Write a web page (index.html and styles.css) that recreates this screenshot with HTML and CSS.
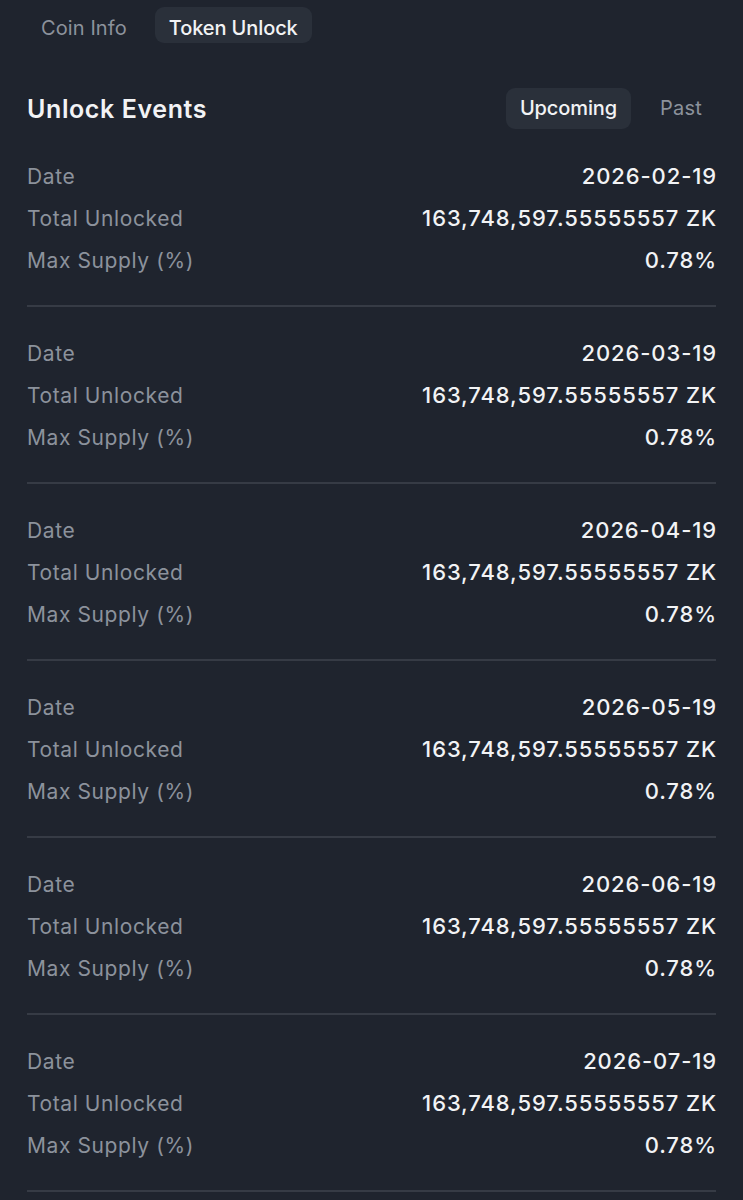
FILE: index.html
```html
<!DOCTYPE html>
<html>
<head>
<meta charset="utf-8">
<link rel="stylesheet" href="styles.css">
</head>
<body>
<div class="page">
  <nav class="tabs">
    <span class="tab">Coin Info</span>
    <span class="tab active">Token Unlock</span>
  </nav>
  <header class="head">
    <h1 class="title">Unlock Events</h1>
    <div class="seg">
      <span class="seg-item active">Upcoming</span>
      <span class="seg-item">Past</span>
    </div>
  </header>
  <section class="events">
    <div class="event">
      <div class="row"><span class="label">Date</span><span class="value">2026-02-19</span></div>
      <div class="row"><span class="label">Total Unlocked</span><span class="value">163,748,597.55555557 ZK</span></div>
      <div class="row"><span class="label">Max Supply (%)</span><span class="value">0.78%</span></div>
    </div>
    <div class="event">
      <div class="row"><span class="label">Date</span><span class="value">2026-03-19</span></div>
      <div class="row"><span class="label">Total Unlocked</span><span class="value">163,748,597.55555557 ZK</span></div>
      <div class="row"><span class="label">Max Supply (%)</span><span class="value">0.78%</span></div>
    </div>
    <div class="event">
      <div class="row"><span class="label">Date</span><span class="value">2026-04-19</span></div>
      <div class="row"><span class="label">Total Unlocked</span><span class="value">163,748,597.55555557 ZK</span></div>
      <div class="row"><span class="label">Max Supply (%)</span><span class="value">0.78%</span></div>
    </div>
    <div class="event">
      <div class="row"><span class="label">Date</span><span class="value">2026-05-19</span></div>
      <div class="row"><span class="label">Total Unlocked</span><span class="value">163,748,597.55555557 ZK</span></div>
      <div class="row"><span class="label">Max Supply (%)</span><span class="value">0.78%</span></div>
    </div>
    <div class="event">
      <div class="row"><span class="label">Date</span><span class="value">2026-06-19</span></div>
      <div class="row"><span class="label">Total Unlocked</span><span class="value">163,748,597.55555557 ZK</span></div>
      <div class="row"><span class="label">Max Supply (%)</span><span class="value">0.78%</span></div>
    </div>
    <div class="event">
      <div class="row"><span class="label">Date</span><span class="value">2026-07-19</span></div>
      <div class="row"><span class="label">Total Unlocked</span><span class="value">163,748,597.55555557 ZK</span></div>
      <div class="row"><span class="label">Max Supply (%)</span><span class="value">0.78%</span></div>
    </div>
  </section>
</div>
</body>
</html>
```

FILE: styles.css
```css
* { box-sizing: border-box; margin: 0; padding: 0; }
html, body { background: #1f242e; }
body {
  font-family: "Inter", "Noto Sans", sans-serif;
  color: #f2f3f5;
  height: 1200px;
  overflow: hidden;
}
.page { padding: 0 27px; }
.tabs {
  display: flex;
  align-items: center;
  gap: 14px;
  padding-top: 7px;
}
.tab {
  font-size: 20px;
  letter-spacing: 0.1px;
  color: #8c929c;
  padding: 6px 14px 0;
  height: 36px;
  line-height: 30px;
  border-radius: 9px;
}
.tab.active {
  background: #2a303a;
  color: #f2f3f5;
  font-weight: 500;
  letter-spacing: -0.1px;
}
.head {
  display: flex;
  align-items: center;
  justify-content: space-between;
  margin-top: 45px;
  height: 41px;
}
.title {
  font-size: 25px;
  font-weight: 600;
  color: #f2f3f5;
  letter-spacing: 0.6px;
}
.seg {
  display: flex;
  align-items: center;
  gap: 15px;
}
.seg-item {
  font-size: 20px;
  letter-spacing: 0.2px;
  color: #8c929c;
  padding: 0 14px;
  height: 41px;
  line-height: 41px;
  border-radius: 9px;
}
.seg-item.active {
  background: #2a303a;
  color: #f2f3f5;
  font-weight: 500;
  letter-spacing: -0.1px;
}
.events { margin-top: 26px; }
.event {
  padding: 0 0 24px;
  border-bottom: 2px solid #363b45;
}
.event + .event { padding-top: 25px; }
.row {
  display: flex;
  justify-content: space-between;
  align-items: center;
  height: 42px;
}
.label {
  color: #8c929c;
  font-size: 21px;
  letter-spacing: 0.6px;
}
.value {
  color: #f2f3f5;
  font-weight: 500;
  font-size: 22px;
  letter-spacing: 0.9px;
  margin-right: -1px;
}
```
